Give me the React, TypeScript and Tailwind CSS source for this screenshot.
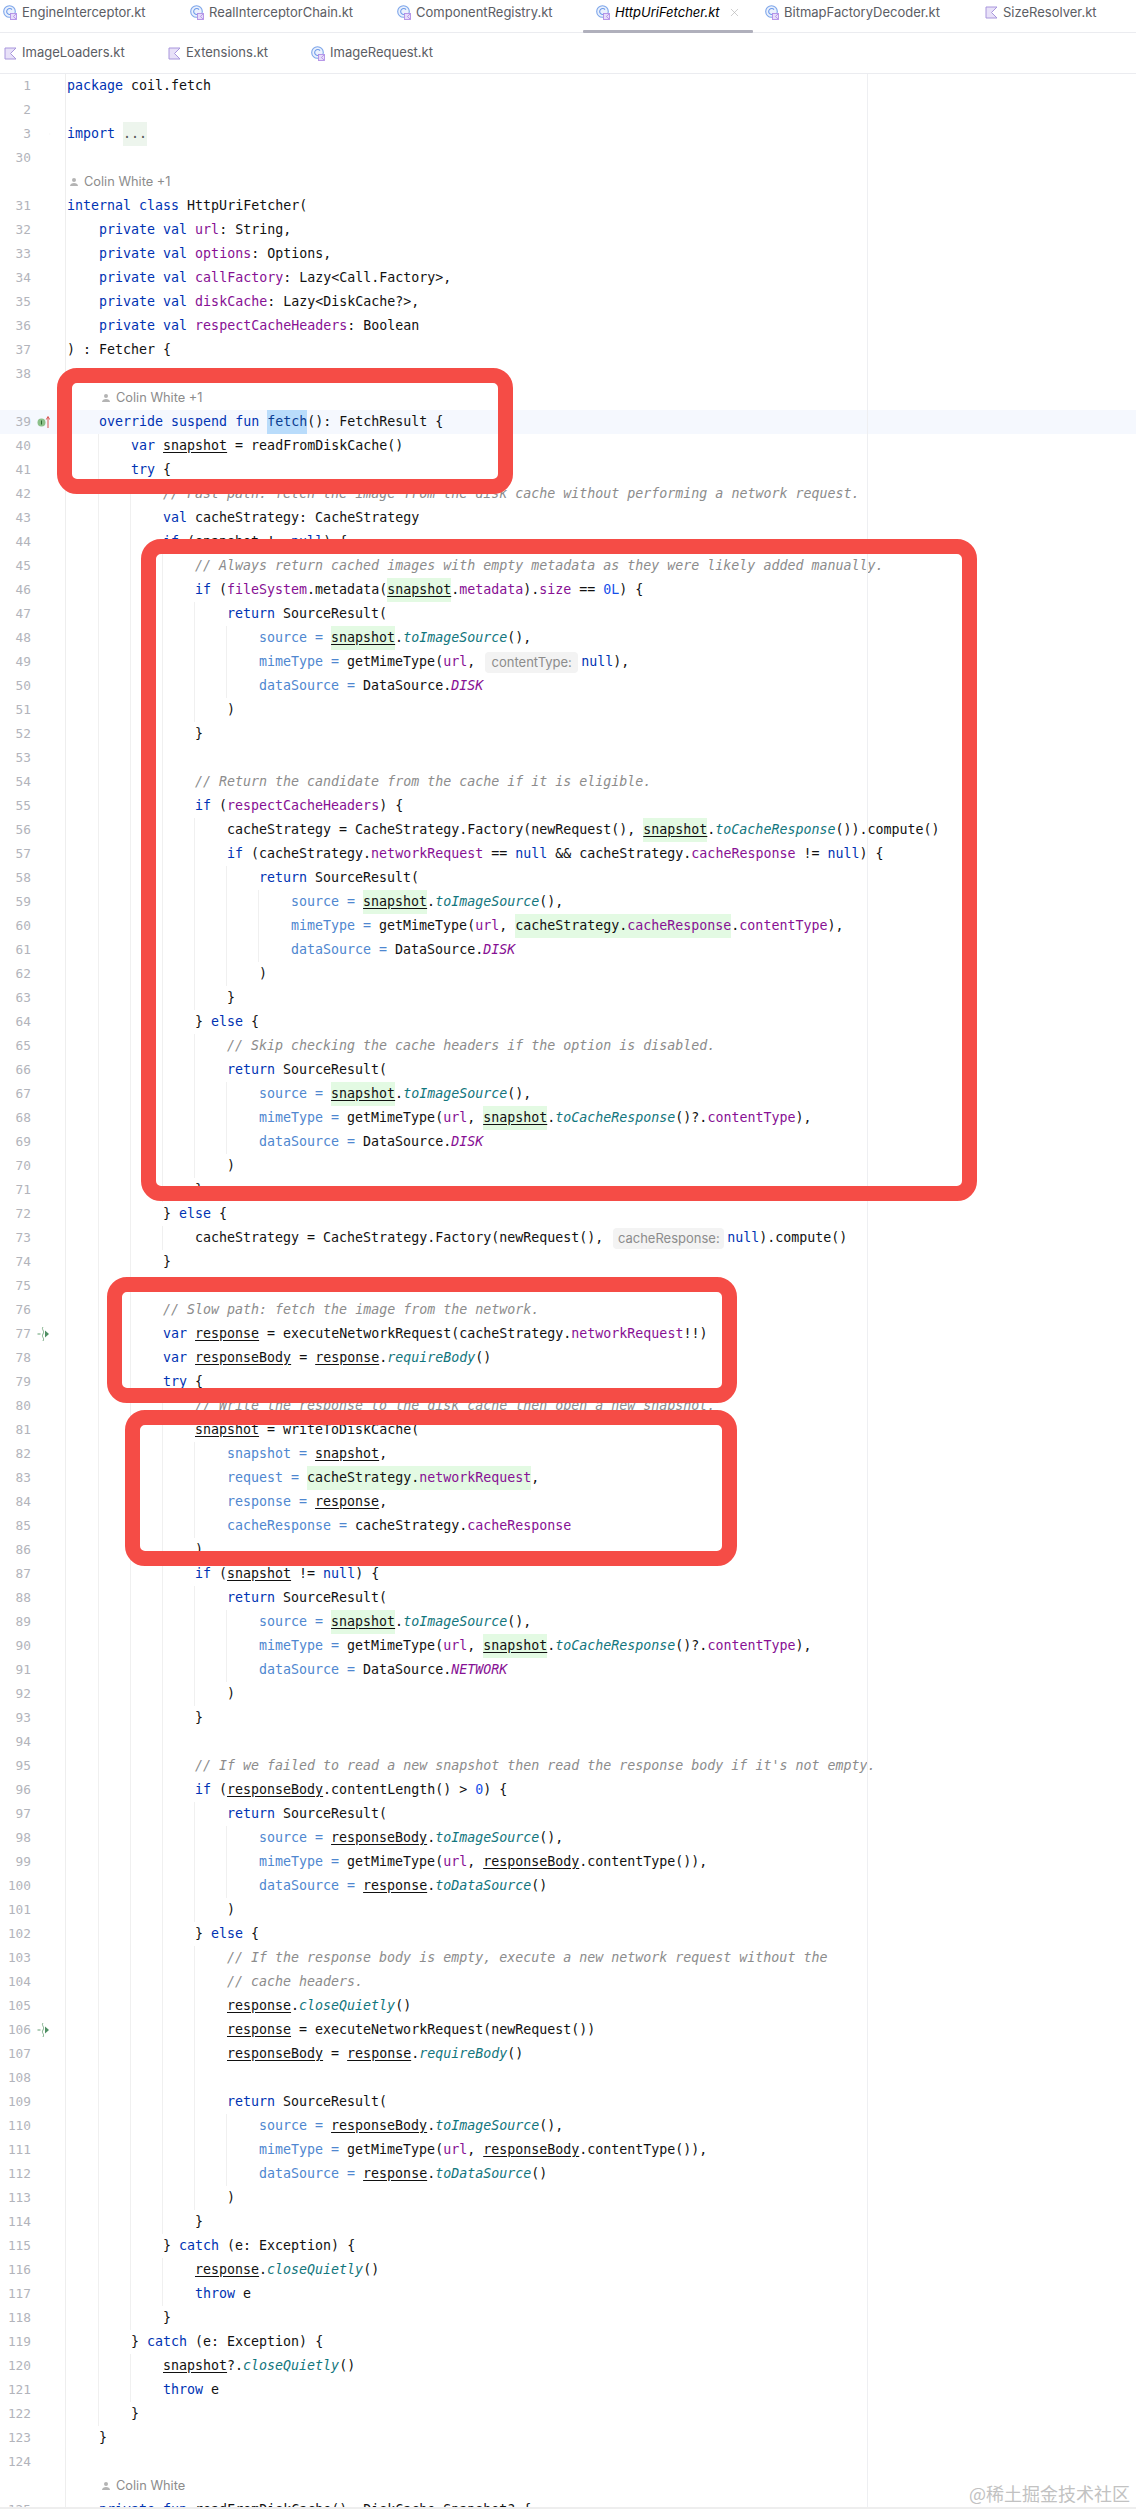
import { X } from "lucide-react";

type Kind = "k" | "p" | "n" | "c" | "f" | "u" | "g" | "h" | "hp" | "s" | "d" | "sel" | "fold";

const tokenClass: Record<Kind, string> = {
  k: "text-[#0033b3]",
  p: "text-[#871094]",
  n: "text-[#4f87d0]",
  c: "text-[#8c8c8c] italic",
  f: "text-[#12767d] italic",
  u: "underline underline-offset-2",
  g: "inline-block h-6 bg-[#e3fae3] underline underline-offset-2",
  h: "inline-block h-6 bg-[#e3fae3]",
  hp: "inline-block h-6 bg-[#e3fae3] text-[#871094]",
  s: "text-[#871094] italic",
  d: "text-[#1750eb]",
  sel: "inline-block h-6 bg-[#b9dcfb] text-[#0a3d91]",
  fold: "inline-block h-6 bg-[#edf5ed] text-[#555555]",
};

const LINES = [
  "[k:package] coil.fetch",
  "",
  "[k:import] [fold:...]",
  "",
  "@Colin White +1",
  "[k:internal] [k:class] HttpUriFetcher(",
  "    [k:private] [k:val] [p:url]: String,",
  "    [k:private] [k:val] [p:options]: Options,",
  "    [k:private] [k:val] [p:callFactory]: Lazy<Call.Factory>,",
  "    [k:private] [k:val] [p:diskCache]: Lazy<DiskCache?>,",
  "    [k:private] [k:val] [p:respectCacheHeaders]: Boolean",
  ") : Fetcher {",
  "",
  "    @Colin White +1",
  "    [k:override] [k:suspend] [k:fun] [sel:fetch](): FetchResult {",
  "        [k:var] [u:snapshot] = readFromDiskCache()",
  "        [k:try] {",
  "            [c:// Fast path: fetch the image from the disk cache without performing a network request.]",
  "            [k:val] cacheStrategy: CacheStrategy",
  "            [k:if] ([u:snapshot] != [k:null]) {",
  "                [c:// Always return cached images with empty metadata as they were likely added manually.]",
  "                [k:if] ([p:fileSystem].metadata([g:snapshot].[p:metadata]).[p:size] == [d:0L]) {",
  "                    [k:return] SourceResult(",
  "                        [n:source =] [g:snapshot].[f:toImageSource](),",
  "                        [n:mimeType =] getMimeType([p:url], {contentType:}[k:null]),",
  "                        [n:dataSource =] DataSource.[s:DISK]",
  "                    )",
  "                }",
  "",
  "                [c:// Return the candidate from the cache if it is eligible.]",
  "                [k:if] ([p:respectCacheHeaders]) {",
  "                    cacheStrategy = CacheStrategy.Factory(newRequest(), [g:snapshot].[f:toCacheResponse]()).compute()",
  "                    [k:if] (cacheStrategy.[p:networkRequest] == [k:null] && cacheStrategy.[p:cacheResponse] != [k:null]) {",
  "                        [k:return] SourceResult(",
  "                            [n:source =] [g:snapshot].[f:toImageSource](),",
  "                            [n:mimeType =] getMimeType([p:url], [h:cacheStrategy.][hp:cacheResponse].[p:contentType]),",
  "                            [n:dataSource =] DataSource.[s:DISK]",
  "                        )",
  "                    }",
  "                } [k:else] {",
  "                    [c:// Skip checking the cache headers if the option is disabled.]",
  "                    [k:return] SourceResult(",
  "                        [n:source =] [g:snapshot].[f:toImageSource](),",
  "                        [n:mimeType =] getMimeType([p:url], [g:snapshot].[f:toCacheResponse]()?.[p:contentType]),",
  "                        [n:dataSource =] DataSource.[s:DISK]",
  "                    )",
  "                }",
  "            } [k:else] {",
  "                cacheStrategy = CacheStrategy.Factory(newRequest(), {cacheResponse:}[k:null]).compute()",
  "            }",
  "",
  "            [c:// Slow path: fetch the image from the network.]",
  "            [k:var] [u:response] = executeNetworkRequest(cacheStrategy.[p:networkRequest]!!)",
  "            [k:var] [u:responseBody] = [u:response].[f:requireBody]()",
  "            [k:try] {",
  "                [c:// Write the response to the disk cache then open a new snapshot.]",
  "                [u:snapshot] = writeToDiskCache(",
  "                    [n:snapshot =] [u:snapshot],",
  "                    [n:request =] [h:cacheStrategy.][hp:networkRequest],",
  "                    [n:response =] [u:response],",
  "                    [n:cacheResponse =] cacheStrategy.[p:cacheResponse]",
  "                )",
  "                [k:if] ([u:snapshot] != [k:null]) {",
  "                    [k:return] SourceResult(",
  "                        [n:source =] [g:snapshot].[f:toImageSource](),",
  "                        [n:mimeType =] getMimeType([p:url], [g:snapshot].[f:toCacheResponse]()?.[p:contentType]),",
  "                        [n:dataSource =] DataSource.[s:NETWORK]",
  "                    )",
  "                }",
  "",
  "                [c:// If we failed to read a new snapshot then read the response body if it's not empty.]",
  "                [k:if] ([u:responseBody].contentLength() > [d:0]) {",
  "                    [k:return] SourceResult(",
  "                        [n:source =] [u:responseBody].[f:toImageSource](),",
  "                        [n:mimeType =] getMimeType([p:url], [u:responseBody].contentType()),",
  "                        [n:dataSource =] [u:response].[f:toDataSource]()",
  "                    )",
  "                } [k:else] {",
  "                    [c:// If the response body is empty, execute a new network request without the]",
  "                    [c:// cache headers.]",
  "                    [u:response].[f:closeQuietly]()",
  "                    [u:response] = executeNetworkRequest(newRequest())",
  "                    [u:responseBody] = [u:response].[f:requireBody]()",
  "",
  "                    [k:return] SourceResult(",
  "                        [n:source =] [u:responseBody].[f:toImageSource](),",
  "                        [n:mimeType =] getMimeType([p:url], [u:responseBody].contentType()),",
  "                        [n:dataSource =] [u:response].[f:toDataSource]()",
  "                    )",
  "                }",
  "            } [k:catch] (e: Exception) {",
  "                [u:response].[f:closeQuietly]()",
  "                [k:throw] e",
  "            }",
  "        } [k:catch] (e: Exception) {",
  "            [u:snapshot]?.[f:closeQuietly]()",
  "            [k:throw] e",
  "        }",
  "    }",
  "",
  "    @Colin White",
  "    [k:private] [k:fun] readFromDiskCache(): DiskCache.Snapshot? {",
];

const indentOf = (line: string) => (line.length - line.trimStart().length) / 4;

function levels() {
  return LINES.map((line, i) => {
    if (line !== "") return indentOf(line);
    const prev = [...LINES.slice(0, i)].reverse().find((l) => l !== "") ?? "";
    const next = LINES.slice(i + 1).find((l) => l !== "") ?? "";
    return Math.min(indentOf(prev), indentOf(next));
  });
}

function Code({ text }: { text: string }) {
  const parts = text.split(/(\[\w+:[^\]]*\]|\{\w+:\})/g).filter(Boolean);
  return (
    <>
      {parts.map((part, i) => {
        const token = part.match(/^\[(\w+):([^\]]*)\]$/);
        if (token) {
          return (
            <span key={i} className={tokenClass[token[1] as Kind]}>
              {token[2]}
            </span>
          );
        }
        if (part === "{contentType:}") return <Hint key={i} label="contentType:" width="w-[93px]" />;
        if (part === "{cacheResponse:}") return <Hint key={i} label="cacheResponse:" width="w-[111px]" />;
        return <span key={i}>{part}</span>;
      })}
    </>
  );
}

function Hint({ label, width }: { label: string; width: string }) {
  return (
    <span
      className={`${width} mr-[3px] ml-[2px] inline-block h-[21px] rounded-[4px] bg-[#f3f3f3] text-center align-middle font-['Inter',sans-serif] text-[13px] leading-[21px] text-[#8c8c8c]`}
    >
      {label}
    </span>
  );
}

function ClassIcon() {
  return (
    <svg width="14" height="15" viewBox="0 0 14 15" className="shrink-0">
      <circle cx="6.5" cy="6.5" r="5.8" fill="#eaf1fd" stroke="#7ea6ea" strokeWidth="1.1" />
      <path d="M9 4.6a3 3 0 1 0 0 3.8" fill="none" stroke="#6f9bea" strokeWidth="1.1" />
      <rect x="7.5" y="8.5" width="6" height="6" fill="#e6dcf9" stroke="#b18fe6" strokeWidth="0.9" />
      <path d="M13 9l-2.6 2.5L13 14" fill="none" stroke="#b18fe6" strokeWidth="0.9" />
    </svg>
  );
}

function KotlinIcon() {
  return (
    <svg width="13" height="13" viewBox="0 0 13 13" className="shrink-0">
      <path d="M1 1h11L6.5 6.5 12 12H1z" fill="#e8e1f8" stroke="#a896dc" strokeWidth="1" />
    </svg>
  );
}

function Tab({
  name,
  width,
  kind,
  active,
}: {
  name: string;
  width: string;
  kind: "class" | "file";
  active?: boolean;
}) {
  return (
    <div className={`${width} relative flex h-full shrink-0 items-center`}>
      {kind === "class" ? <ClassIcon /> : <KotlinIcon />}
      <span className={active ? "ml-[5px] text-black italic" : "ml-[5px] text-[#5b5d64]"}>{name}</span>
      {active && <X size={13} strokeWidth={1.2} className="ml-[8px] text-[#b4b4b4]" />}
      {active && <div className="absolute top-[30px] -left-[13px] h-[3px] w-[170px] rounded-[1px] bg-[#b0b0bc]" />}
    </div>
  );
}

function RecursionIcon() {
  return (
    <svg width="13" height="16" viewBox="0 0 13 16">
      <path d="M6 1c-2 2.500 2 3.500 0 7s2 3.500 0 7" fill="none" stroke="#7fb08a" strokeWidth="1" />
      <path d="M0.5 8h3" stroke="#7fb08a" strokeWidth="1.200" />
      <path d="M8 4.500l4 3.500-4 3.500z" fill="#4f8f63" />
    </svg>
  );
}

function ImplementIcon() {
  return (
    <svg width="13" height="14" viewBox="0 0 13 14">
      <circle cx="4.5" cy="7.5" r="4" fill="#8cc08a" />
      <path d="M4.5 5.5v4" stroke="#2f6b33" strokeWidth="1" />
      <path d="M11 13V2M9.3 4.5 11 1.5l1.7 3" fill="none" stroke="#d9534f" strokeWidth="1" />
    </svg>
  );
}

function Gutter({ num }: { num?: number }) {
  return (
    <div className="flex w-[66px] shrink-0 items-center border-r border-[#eeeeee]">
      <span className="w-[31px] shrink-0 text-right text-[12.8px] text-[#b2b4bb]">{num}</span>
      <span className="ml-[6px] flex w-[14px] items-center">
        {num === 39 && <ImplementIcon />}
        {(num === 77 || num === 106) && <RecursionIcon />}
        {num === 3 && (
          <svg width="14" height="14" viewBox="0 0 14 14" className="ml-[12px]">
            <path d="M4.5 3.5 8 7l-3.500 3.500" fill="none" stroke="#b4b4b4" strokeWidth="1" />
          </svg>
        )}
      </span>
    </div>
  );
}

function Row({ line, level, num }: { line: string; level: number; num?: number }) {
  const text = line.trimStart();
  const author = text.startsWith("@");
  return (
    <div className={num === 39 ? "flex h-6 bg-[#f5f8fe]" : "flex h-6"}>
      <Gutter num={num} />
      {Array.from({ length: level }, (_, k) => (
        <div key={k} className={k === 0 ? "h-6 w-8 shrink-0" : "h-6 w-8 shrink-0 border-l border-[#f0f0f0]"} />
      ))}
      {author ? (
        <div className="flex items-center gap-[5px] pl-[3px] font-['Inter',sans-serif] text-[12.8px] text-[#8c8c8c]">
          <svg width="10" height="10" viewBox="0 0 10 10">
            <circle cx="5" cy="3" r="2" fill="#b4b4b4" />
            <path d="M1 9c0-2 2-3 4-3s4 1 4 3z" fill="#b4b4b4" />
          </svg>
          {text.slice(1)}
        </div>
      ) : (
        <div className="pl-px whitespace-pre text-[#111111]">
          <Code text={text} />
        </div>
      )}
    </div>
  );
}

function RedBox({ className }: { className: string }) {
  return <div className={`absolute rounded-[20px] border-[15px] border-[#f54c46] ${className}`} />;
}

export default function App() {
  const rowLevels = levels();
  let n = 0;
  const rows = LINES.map((line, i) => {
    if (line.trimStart().startsWith("@")) return <Row key={i} line={line} level={rowLevels[i]} />;
    n = n === 3 ? 30 : n + 1;
    return <Row key={i} line={line} level={rowLevels[i]} num={n} />;
  });

  return (
    <div className="relative flex h-[2509px] w-[1136px] flex-col overflow-hidden bg-white">
      <div className="flex h-[33px] shrink-0 border-b border-[#ebecf0] pb-[7px] pl-[3px] font-['Inter',sans-serif] text-[13px]">
        <Tab name="EngineInterceptor.kt" width="w-[187px]" kind="class" />
        <Tab name="RealInterceptorChain.kt" width="w-[207px]" kind="class" />
        <Tab name="ComponentRegistry.kt" width="w-[199px]" kind="class" />
        <Tab name="HttpUriFetcher.kt" width="w-[169px]" kind="class" active />
        <Tab name="BitmapFactoryDecoder.kt" width="w-[220px]" kind="class" />
        <Tab name="SizeResolver.kt" width="w-[140px]" kind="file" />
      </div>
      <div className="flex h-[41px] shrink-0 border-b border-[#ebecf0] pl-[4px] font-['Inter',sans-serif] text-[13px]">
        <Tab name="ImageLoaders.kt" width="w-[164px]" kind="file" />
        <Tab name="Extensions.kt" width="w-[143px]" kind="file" />
        <Tab name="ImageRequest.kt" width="w-[160px]" kind="class" />
      </div>
      <div className="relative min-h-0 flex-1 overflow-hidden font-['DejaVu_Sans_Mono',monospace] text-[13.3px] leading-6">
        {rows}
        <div className="absolute top-0 bottom-0 left-[867px] w-px bg-[#eeeff2]" />
      </div>
      <div className="h-[2px] shrink-0 bg-[#eeeeee]" />

      <RedBox className="top-[368px] left-[57px] h-[126px] w-[456px]" />
      <RedBox className="top-[539px] left-[141px] h-[662px] w-[836px]" />
      <RedBox className="top-[1277px] left-[107px] h-[126px] w-[630px]" />
      <RedBox className="top-[1410px] left-[125px] h-[156px] w-[612px]" />

      <div className="absolute top-[2481px] right-[6px] font-['Noto_Sans_CJK_SC',sans-serif] text-[18px] leading-6 text-[#c2c2c2]">
        @稀土掘金技术社区
      </div>
    </div>
  );
}
